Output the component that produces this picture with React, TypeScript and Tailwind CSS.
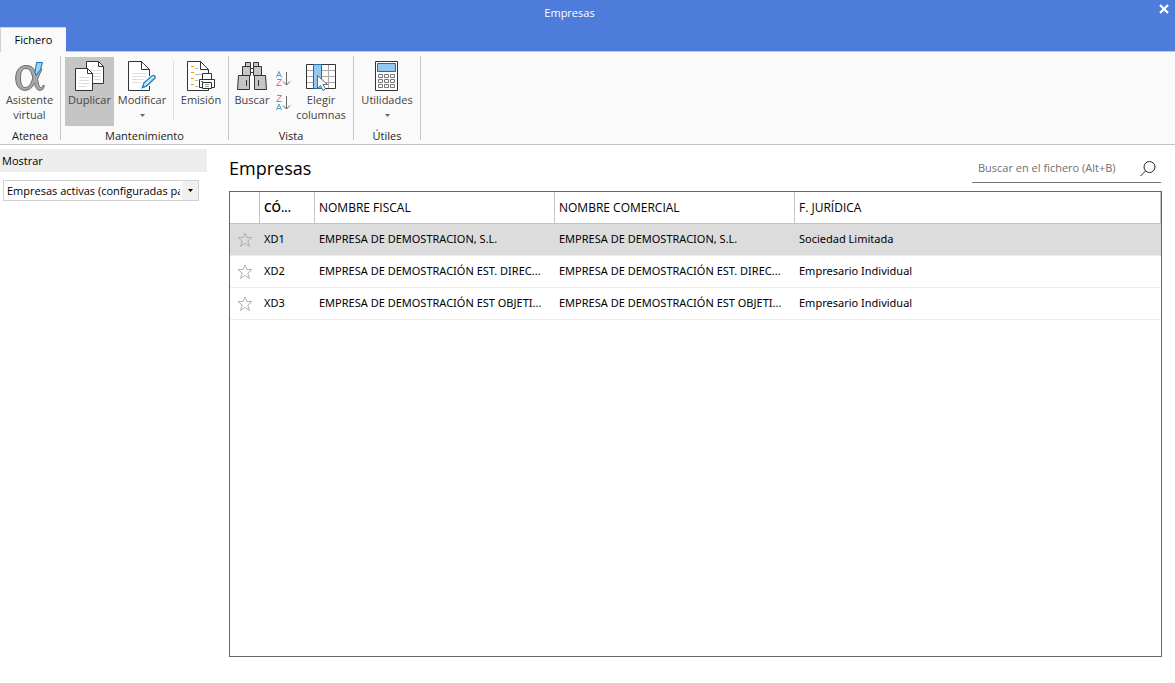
import React from 'react';
import clsx from 'clsx';

const rows = [
  { code: 'XD1', fiscal: 'EMPRESA DE DEMOSTRACION, S.L.', comercial: 'EMPRESA DE DEMOSTRACION, S.L.', juridica: 'Sociedad Limitada' },
  { code: 'XD2', fiscal: 'EMPRESA DE DEMOSTRACIÓN EST. DIREC...', comercial: 'EMPRESA DE DEMOSTRACIÓN EST. DIREC...', juridica: 'Empresario Individual' },
  { code: 'XD3', fiscal: 'EMPRESA DE DEMOSTRACIÓN EST OBJETI...', comercial: 'EMPRESA DE DEMOSTRACIÓN EST OBJETI...', juridica: 'Empresario Individual' },
];

const AlphaIcon = () => (
  <svg width="30" height="30" viewBox="0 0 30 30" fill="none">
    <path
      fillRule="evenodd"
      d="M11 4.500C4.500 4.500 .7 10 .7 17S4 29.300 10 29.300c4.500 0 7.500-3 9.500-7.300 1 5 2.500 7.300 5.500 7.300 2.500 0 4-1.600 4.300-4.800h-1.500c-.3 1.500-.8 2-1.800 2-2 0-2.500-3.500-3.500-8.500l4.500-10h-3.500L21 13.500C19.500 7.500 17 4.500 11 4.500zM11 7.500c4 0 5.500 4 6.800 9.500C16 23 14 26.500 10.500 26.500c-3.500 0-5-4-5-9.500s1.500-9.500 5.500-9.500z"
      fill="#a8a8a8"
      stroke="#6a6a6a"
    />
    <path d="M21.500 1.500h6l-2 7-4.500 6-1-3z" fill="#9fd0f5" stroke="#1272b8" />
  </svg>
);

const DuplicateIcon = () => (
  <svg width="30" height="30" viewBox="0 0 30 30" fill="#fff" stroke="#333">
    <path d="M11.500 .5h12l5 5v17h-17z" />
    <path d="M23.500 .5v5h5z" />
    <path d="M16 9.500h10M16 12.500h10M16 15.500h10M19 18.500h7" stroke="#dcdcdc" />
    <path d="M.5 7.500h12l5 5v17H.5z" />
    <path d="M12.500 7.500v5h5z" />
    <path d="M4 16.500h10M4 19.500h10M4 22.500h10M4 25.500h7" stroke="#dcdcdc" />
  </svg>
);

const EditIcon = () => (
  <svg width="28" height="30" viewBox="0 0 28 30" fill="none" stroke="#333">
    <path d="M21.500 15V9l-8-8.500H.5v29h21V25" fill="#fff" />
    <path d="M13.500 .5v8h8z" fill="#fff" />
    <path d="M4 12.500h14M4 15.500h14M4 18.500h12M4 21.500h10" stroke="#dedede" />
    <path d="M14.500 26.500l1.500-4.500 8-7c2-1.500 4 .5 2.500 2.500l-8 7.500z" fill="#fff" stroke="#1f86c7" strokeWidth="1.500" />
    <path d="M17 24l8-7" stroke="#8cc8ee" />
  </svg>
);

const ReportIcon = () => (
  <svg width="28" height="30" viewBox="0 0 28 30" fill="none" stroke="#333">
    <path d="M21.500 12V9l-8-8.500H.5v29h21V27" fill="#fff" />
    <path d="M13.500 .5v8h8z" fill="#fff" />
    <path d="M4 5.500h3M4 11.500h3M4 17.500h3M4 23.500h3" stroke="#f09a10" />
    <path d="M8 7.500h3M8 13.500h8M8 19.500h3M8 25.500h3" stroke="#bbb" />
    <path d="M15.500 18v-5.500h9V18M15.500 26.500h-3v-8h15v8h-3" fill="#fff" />
    <path d="M15.500 21.500h9v6h-9z" fill="#fff" />
    <path d="M18 23.500h4M18 25.500h4" stroke="#aaa" />
    <path d="M14 20.500h2" stroke="#1f86c7" />
  </svg>
);

const BinocularsIcon = () => (
  <svg width="30" height="30" viewBox="0 0 30 30" fill="#c6c6c6" stroke="#333">
    <path d="M8.500 1.500h5v4h-5zM16.500 1.500h5v4h-5zM5.500 5.500h8v9h-8zM16.500 5.500h8v9h-8z" />
    <path d="M13.500 7.500h3v4h-3z" fill="#fff" />
    <path d="M1.500 14.500h11v14H.5zM17.500 14.500h11l1 14h-12z" />
    <path d="M9.500 19v6M21.500 19v6" />
  </svg>
);

const SortIcon = ({ desc = false }: { desc?: boolean }) => (
  <svg width="16" height="16" viewBox="0 0 16 16" fill="none">
    <path d={desc ? 'M.5 15l2.500-6 2.500 6M1.500 13.500h3' : 'M.5 6.500L3 .5l2.500 6M1.500 4.500h3'} stroke="#4a9fd4" />
    <path d={desc ? 'M1 .5h4.500L.5 6.500h5' : 'M1 8.500h4.500l-5 6h5'} stroke="#e46c6c" />
    <path d="M10.500 1v13M7 10.500l3.500 3.500 3.500-3.500" stroke="#666" />
  </svg>
);

const ColumnsIcon = () => (
  <svg width="30" height="30" viewBox="0 0 30 30" fill="none">
    <path d="M.5 3.500h29v24H.5z" fill="#fff" stroke="#333" />
    <path d="M1 9.500h28M1 15.500h28M1 21.500h28M22.500 4v23" stroke="#aaa" />
    <path d="M7.500 3.500h8v24h-8z" fill="#93c9ef" stroke="#1272b8" />
    <path d="M11.500 14.500v13l3-3 2.500 5 2.500-1.500-2.500-4.500h4.500z" fill="#fff" stroke="#666" />
  </svg>
);

const CalculatorIcon = () => (
  <svg width="24" height="30" viewBox="0 0 24 30" fill="#fff">
    <path d="M.5 .5h22v29H.5z" stroke="#333" />
    <path d="M2.500 2.500h18v8h-18z" fill="#93c9ef" stroke="#1272b8" />
    <path
      d="M3.500 13.500h4v3h-4zM9.500 13.500h4v3h-4zM15.500 13.500h4v3h-4zM3.500 18.500h4v3h-4zM9.500 18.500h4v3h-4zM15.500 18.500h4v3h-4zM3.500 23.500h4v3h-4zM9.500 23.500h4v3h-4zM15.500 23.500h4v3h-4z"
      stroke="#777"
    />
  </svg>
);

const Caret = ({ className }: { className?: string }) => (
  <svg width="5" height="3" viewBox="0 0 5 3" className={className}>
    <path d="M0 0h5L2.500 3z" fill="currentColor" />
  </svg>
);

interface RibbonButtonProps {
  icon: React.ReactNode;
  label: string;
  className: string;
  active?: boolean;
  menu?: boolean;
}

const RibbonButton = ({ icon, label, className, active, menu }: RibbonButtonProps) => (
  <button
    type="button"
    className={clsx('flex h-[69px] shrink-0 flex-col items-center pt-1 leading-[15px] text-[#444]', active && 'bg-[#c5c5c5]', className)}
  >
    {icon}
    <span className="mt-px">{label}</span>
    {menu && <Caret className="mt-[7px] text-[#666]" />}
  </button>
);

const RibbonGroup = ({ title, className, children }: { title: string; className: string; children: React.ReactNode }) => (
  <section className={clsx('flex h-[84px] shrink-0 flex-col border-r border-[#c8c8c8] pt-px', className)}>
    <div className="flex flex-1">{children}</div>
    <h2 className="text-center leading-2 text-[#222]">{title}</h2>
  </section>
);

const cell = 'whitespace-nowrap pl-1';

const App = () => {
  return (
    <div className="flex min-h-screen flex-col bg-white font-['Open_Sans',sans-serif] text-[11px] text-black">
      <header className="flex h-[52px] flex-col justify-between border-b border-[#c3c7d0] bg-[#4d7cdb]">
        <div className="grid grid-cols-[1fr_auto_1fr] pt-0.5 text-white">
          <h1 className="col-start-2 pr-9 leading-[22px]">Empresas</h1>
          <button type="button" aria-label="Cerrar" className="mr-1.5 mt-px h-3 justify-self-end">
            <svg width="10" height="10" viewBox="0 0 10 10">
              <path d="M1 1l8 8M9 1L1 9" stroke="#fff" strokeWidth="2.2" />
            </svg>
          </button>
        </div>
        <nav className="-mb-px flex">
          <button type="button" className="h-[25px] w-[66px] border-l border-t border-[#d0d0d0] bg-[#fafafa]">
            Fichero
          </button>
        </nav>
      </header>

      <div className="flex h-[93px] border-b border-[#c3c3c3] bg-[#fafafa] pt-1">
        <RibbonGroup title="Atenea" className="w-[61px]">
          <RibbonButton icon={<AlphaIcon />} label="Asistente virtual" className="w-[59px]" />
        </RibbonGroup>
        <RibbonGroup title="Mantenimiento" className="w-[168px]">
          <RibbonButton icon={<DuplicateIcon />} label="Duplicar" className="ml-1 w-[49px]" active />
          <RibbonButton icon={<EditIcon />} label="Modificar" className="w-[56px]" menu />
          <div className="ml-[3px] mt-1 h-[60px] w-px bg-[#dedede]" />
          <RibbonButton icon={<ReportIcon />} label="Emisión" className="w-[54px]" />
        </RibbonGroup>
        <RibbonGroup title="Vista" className="w-[125px]">
          <RibbonButton icon={<BinocularsIcon />} label="Buscar" className="w-[46px]" />
          <div className="ml-px flex flex-col gap-2 pt-3.5">
            <button type="button" aria-label="Orden ascendente">
              <SortIcon />
            </button>
            <button type="button" aria-label="Orden descendente">
              <SortIcon desc />
            </button>
          </div>
          <RibbonButton icon={<ColumnsIcon />} label="Elegir columnas" className="ml-px w-[56px]" />
        </RibbonGroup>
        <RibbonGroup title="Útiles" className="w-[67px]">
          <RibbonButton icon={<CalculatorIcon />} label="Utilidades" className="w-[66px]" menu />
        </RibbonGroup>
      </div>

      <div className="flex flex-1">
        <aside className="w-[207px] shrink-0 pt-1">
          <label htmlFor="mostrar" className="block bg-[#ededed] pl-0.5 leading-[23px]">
            Mostrar
          </label>
          <div className="ml-[3px] mt-2 grid h-[21px] w-[196px] border border-[#d0d0d0]">
            <select id="mostrar" className="col-start-1 row-start-1 w-full min-w-0 appearance-none truncate pl-[3px] pr-[18px] pt-0.5 text-clip">
              <option>Empresas activas (configuradas para mostrar)</option>
            </select>
            <span className="pointer-events-none col-start-1 row-start-1 flex w-4 items-center justify-center justify-self-end bg-[#f0f0f0]">
              <Caret />
            </span>
          </div>
        </aside>

        <main className="ml-[22px] mr-[13px] flex min-w-0 flex-1 flex-col pb-[26px]">
          <div className="flex h-[46px] items-start justify-between pt-2">
            <h2 className="text-[18px] leading-[30px]">Empresas</h2>
            <div className="mr-px flex h-[30px] w-[189px] items-center border-b border-[#777] pl-1.5 pr-[5px] pt-0.5">
              <input
                type="search"
                aria-label="Buscar en el fichero"
                placeholder="Buscar en el fichero (Alt+B)"
                className="min-w-0 flex-1 outline-none placeholder:text-[#707070]"
              />
              <svg width="16" height="16" viewBox="0 0 16 16" fill="none" stroke="#222">
                <circle cx="9.500" cy="6" r="5.500" />
                <path d="M5.500 10L.5 15" />
              </svg>
            </div>
          </div>

          <div className="flex-1 border border-[#666]">
            <table className="w-full table-fixed border-separate border-spacing-0 text-left">
              <colgroup>
                <col className="w-[30px]" />
                <col className="w-[55px]" />
                <col className="w-[240px]" />
                <col className="w-[240px]" />
                <col />
              </colgroup>
              <thead className="text-[12px]">
                <tr className="h-8 *:border-b *:border-r *:border-[#c3c3c3] *:font-normal">
                  <th aria-label="Favorito" />
                  <th className={cell}>
                    <span className="font-semibold">CÓ...</span>
                  </th>
                  <th className={cell}>NOMBRE FISCAL</th>
                  <th className={cell}>NOMBRE COMERCIAL</th>
                  <th className={cell}>F. JURÍDICA</th>
                </tr>
              </thead>
              <tbody className="font-['Noto_Sans',sans-serif]">
                {rows.map((row, i) => (
                  <tr key={row.code} className={clsx('h-8 *:border-b *:border-[#ececec]', i === 0 && 'bg-[#dcdcdc]')}>
                    <td>
                      <button type="button" aria-label="Marcar como favorita" className="mx-auto block">
                        <svg width="16" height="16" viewBox="0 0 16 16" fill="none" stroke="#b0b0b0">
                          <path d="M8 1l1.800 4.500h5.200l-4.200 3.500 1.700 5.500L8 11.300l-4.500 3.200L5.200 9 1 5.500h5.200z" />
                        </svg>
                      </button>
                    </td>
                    <td className={cell}>{row.code}</td>
                    <td className={cell}>{row.fiscal}</td>
                    <td className={cell}>{row.comercial}</td>
                    <td className={cell}>{row.juridica}</td>
                  </tr>
                ))}
              </tbody>
            </table>
          </div>
        </main>
      </div>
    </div>
  );
};

export default App;
